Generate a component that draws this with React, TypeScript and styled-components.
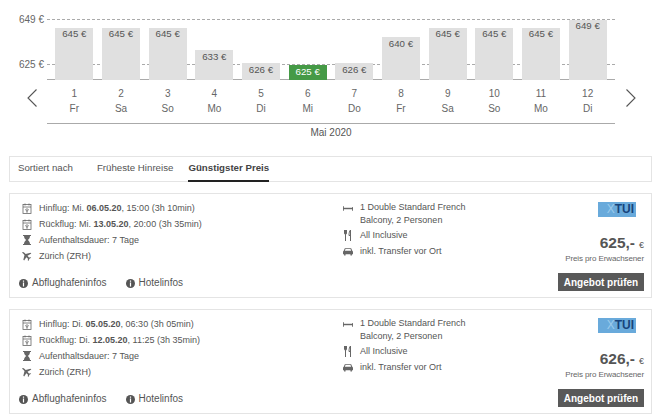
import { ReactNode } from 'react';
import styled, { createGlobalStyle } from 'styled-components';

const GlobalStyle = createGlobalStyle`
  html, body {
    margin: 0;
    padding: 0;
    background: #fff;
  }
  body {
    font-family: "Liberation Sans", Arial, sans-serif;
    font-size: 10px;
    color: #555;
  }
`;

const Page = styled.div`
  width: 667px;
  height: 419px;
  overflow: hidden;
`;

// Chart
const ChartRow = styled.div`
  display: grid;
  grid-template-columns: 47px 568px 52px;
  padding-top: 19px;
`;

const ArrowCell = styled.div`
  display: flex;
  padding-top: 70px;
  padding-left: ${p => (p.$left ? '27px' : '11px')};
  color: #555;
`;

const Plot = styled.div`
  position: relative;
  height: 60px;
  display: grid;
  grid-template-columns: repeat(12, 1fr);
  padding: 0 4px;
  align-items: end;
  border-bottom: 1px solid #aaa;
`;

const GuideLine = styled.div`
  position: absolute;
  left: 0;
  right: 0;
  top: ${p => p.$top}px;
  border-top: 1px dashed #aaa;
`;

const GuideLabel = styled.span`
  position: absolute;
  right: 100%;
  top: -6px;
  margin-right: 3px;
  white-space: nowrap;
  line-height: 12px;
  color: #666;
`;

const Bar = styled.div`
  position: relative;
  justify-self: center;
  width: 38px;
  height: ${p => p.$height}px;
  margin-bottom: -1px;
  background: ${p => (p.$best ? '#459a46' : '#e0e0e0')};
  color: ${p => (p.$best ? '#fff' : '#555')};
  font-size: 9.7px;
  text-align: center;
  line-height: 12px;
`;

const BarLabel = styled.span`
  display: block;
  margin-top: ${p => (p.$tight ? 1 : 0)}px;
`;

const Days = styled.div`
  display: grid;
  grid-template-columns: repeat(12, 1fr);
  padding: 6px 4px 7px;
  border-bottom: 1px solid #aaa;
`;

const Day = styled.div`
  text-align: center;
  line-height: 15px;
  color: #666;
`;

const Month = styled.div`
  text-align: center;
  line-height: 12px;
  margin-top: 3px;
  color: #555;
`;

// Sort bar
const SortBar = styled.div`
  display: flex;
  align-items: stretch;
  margin: 17px 15px 0 9px;
  height: 26px;
  box-sizing: border-box;
  border: 1px solid #e4e4e4;
  padding-left: 8px;
  font-size: 9.7px;
`;

const SortItem = styled.div`
  display: flex;
  align-items: center;
  margin-right: ${p => p.$gap}px;
  padding-bottom: 2px;
  font-weight: ${p => (p.$active ? 'bold' : 'normal')};
  color: ${p => (p.$active ? '#444' : '#555')};
  height: 25px;
  box-sizing: border-box;
  border-bottom: 2px solid ${p => (p.$active ? '#222' : 'transparent')};
`;

// Offer card
const Card = styled.div`
  display: grid;
  grid-template-columns: 321px 1fr auto;
  margin: ${p => p.$top}px 15px 0 9px;
  height: 105px;
  box-sizing: border-box;
  border: 1px solid #e4e4e4;
  padding: 6px 7px 7px 12px;
`;

const Column = styled.div`
  display: flex;
  flex-direction: column;
`;

const InfoRow = styled.div`
  display: flex;
  align-items: flex-start;
  gap: 7px;
  line-height: 16px;
  height: ${p => (p.$tall ? 'auto' : '16px')};
  white-space: nowrap;
  font-size: 9px;
  color: #555;
`;

const RowIcon = styled.span`
  display: flex;
  width: 10px;
  height: 16px;
  align-items: center;
  justify-content: center;
  flex: none;
  color: #666;
`;

const Links = styled.div`
  display: flex;
  gap: 19px;
  margin: auto 0 0 -3px;
`;

const InfoLink = styled.div`
  display: flex;
  align-items: center;
  gap: 4px;
  line-height: 16px;
`;

const MidText = styled.div`
  line-height: 13px;
  padding-top: 1px;
  white-space: normal;
  width: 120px;
`;

const RightColumn = styled.div`
  display: flex;
  flex-direction: column;
  align-items: flex-end;
`;

const Logo = styled.div`
  width: 38px;
  height: 15px;
  margin: 2px 8px 0 0;
  background: #69aadb;
  display: flex;
  align-items: center;
  justify-content: flex-end;
  padding-right: 2px;
  box-sizing: border-box;
  font-weight: bold;
  font-size: 12px;
  line-height: 15px;
  color: #17437c;
`;

const LogoMark = styled.span`
  color: #9ccbec;
  font-weight: normal;
`;

const Price = styled.div`
  margin-top: 18px;
  font-size: 15.5px;
  font-weight: bold;
  line-height: 16px;
  color: #555;
`;

const Currency = styled.span`
  font-size: 9px;
  font-weight: normal;
  margin-left: 4px;
`;

const PriceNote = styled.div`
  font-size: 8px;
  line-height: 10px;
  margin-top: 1px;
  color: #666;
  letter-spacing: -0.1px;
`;

const CheckButton = styled.button`
  margin-top: 9px;
  width: 86px;
  height: 18px;
  padding: 0;
  border: none;
  background: #595959;
  color: #fff;
  font-family: inherit;
  font-size: 10px;
  font-weight: bold;
`;

// Icons
const Chevron = ({ left }: { left?: boolean }) => (
  <svg width="10" height="18" viewBox="0 0 10 18" fill="none" stroke="currentColor" strokeWidth="1.1">
    <path d={left ? 'M9.5 .5 1 9l8.5 8.5' : 'M.5 .5 9 9l-8.5 8.5'} />
  </svg>
);

const CalendarIcon = () => (
  <svg width="10" height="11" viewBox="0 0 10 11" fill="none" stroke="currentColor" strokeWidth="0.8">
    <rect x="1" y="1.5" width="8" height="9" />
    <path d="M1 4h8M3 .5v2M7 .5v2" />
    <path d="M5 5v4M3 6.5l2 1 2-1M4 9h2" strokeWidth="0.7" />
  </svg>
);

const HourglassIcon = () => (
  <svg width="8" height="10" viewBox="0 0 8 10" fill="currentColor">
    <path d="M0 0h8v1H7c0 2-1 3-2.200 4C6 6 7 7 7 9h1v1H0V9h1c0-2 1-3 2.200-4C2 4 1 3 1 1H0z" />
  </svg>
);

// nose points to the upper left, as in the reference
const PlaneIcon = () => (
  <svg width="12" height="11" viewBox="0 0 12 11" fill="currentColor">
    <path d="M.4.400c.6-.5 1.700-.2 2.400.5l1.600 1.500L10.200 1l1 1-4.600 2.600 1.800 2 1.800-.3.800.8-2.100 1.200-1.200 2.600-.8-.8.300-1.800-2-1.800L2.600 10.400l-1-1L3 3.600 1.300 2C.6 1.300 0 .900.400.400z" />
  </svg>
);

const BedIcon = () => (
  <svg width="11" height="7" viewBox="0 0 11 7" fill="none" stroke="currentColor">
    <path d="M.5 1v5M10.500 2v4" />
    <path d="M0 3.500h11" strokeWidth="1.600" />
  </svg>
);

const CutleryIcon = () => (
  <svg width="8" height="11" viewBox="0 0 8 11" fill="none" stroke="currentColor" strokeWidth="1">
    <path d="M.5 0v3c0 1 .5 1.500 1 1.500S2.500 4 2.500 3V0M1.500 0v11" />
    <path d="M6.500 11V0C5.500 1 5 3 5 5.500h1.500" />
  </svg>
);

const CarIcon = () => (
  <svg width="11" height="9" viewBox="0 0 11 9" fill="currentColor">
    <path d="M2 .8h7l1.200 3c.5.200.8.600.8 1.200v2.500H9.800V9H8.200V7.500H2.800V9H1.200V7.500H0V5c0-.6.300-1 .8-1.200zM2.800 1.800 2 3.800h7l-.8-2z" />
  </svg>
);

const InfoIcon = () => (
  <svg width="9" height="9" viewBox="0 0 9 9">
    <circle cx="4.500" cy="4.500" r="4.500" fill="#555" />
    <path d="M3.900 1.600h1.200v1.200H3.900zM3.900 3.600h1.200v3.800H3.900z" fill="#fff" />
  </svg>
);

const days = [
  { day: 1, name: 'Fr', price: 645, height: 52 },
  { day: 2, name: 'Sa', price: 645, height: 52 },
  { day: 3, name: 'So', price: 645, height: 52 },
  { day: 4, name: 'Mo', price: 633, height: 30 },
  { day: 5, name: 'Di', price: 626, height: 17 },
  { day: 6, name: 'Mi', price: 625, height: 15 },
  { day: 7, name: 'Do', price: 626, height: 17 },
  { day: 8, name: 'Fr', price: 640, height: 43 },
  { day: 9, name: 'Sa', price: 645, height: 52 },
  { day: 10, name: 'So', price: 645, height: 52 },
  { day: 11, name: 'Mo', price: 645, height: 52 },
  { day: 12, name: 'Di', price: 649, height: 60 },
];

interface Offer {
  out: [string, string, string];
  back: [string, string, string];
  price: number;
}

const offers: Offer[] = [
  {
    out: ['Mi.', '06.05.20', '15:00 (3h 10min)'],
    back: ['Mi.', '13.05.20', '20:00 (3h 35min)'],
    price: 625,
  },
  {
    out: ['Di.', '05.05.20', '06:30 (3h 05min)'],
    back: ['Di.', '12.05.20', '11:25 (3h 35min)'],
    price: 626,
  },
];

const Row = ({ icon, tall, children }: { icon: ReactNode; tall?: boolean; children: ReactNode }) => (
  <InfoRow $tall={tall}>
    <RowIcon>{icon}</RowIcon>
    {children}
  </InfoRow>
);

const OfferCard = ({ offer, top }: { offer: Offer; top: number }) => (
  <Card $top={top}>
    <Column>
      <Row icon={<CalendarIcon />}>
        <span>Hinflug: {offer.out[0]} <b>{offer.out[1]}</b>, {offer.out[2]}</span>
      </Row>
      <Row icon={<CalendarIcon />}>
        <span>Rückflug: {offer.back[0]} <b>{offer.back[1]}</b>, {offer.back[2]}</span>
      </Row>
      <Row icon={<HourglassIcon />}>Aufenthaltsdauer: 7 Tage</Row>
      <Row icon={<PlaneIcon />}>Zürich (ZRH)</Row>
      <Links>
        <InfoLink><InfoIcon />Abflughafeninfos</InfoLink>
        <InfoLink><InfoIcon />Hotelinfos</InfoLink>
      </Links>
    </Column>
    <Column>
      <Row icon={<BedIcon />} tall>
        <MidText>1 Double Standard French Balcony, 2 Personen</MidText>
      </Row>
      <Row icon={<CutleryIcon />}>All Inclusive</Row>
      <Row icon={<CarIcon />}>inkl. Transfer vor Ort</Row>
    </Column>
    <RightColumn>
      <Logo><LogoMark>X</LogoMark>TUI</Logo>
      <Price>{offer.price},-<Currency>€</Currency></Price>
      <PriceNote>Preis pro Erwachsener</PriceNote>
      <CheckButton>Angebot prüfen</CheckButton>
    </RightColumn>
  </Card>
);

const App = () => (
  <Page>
    <GlobalStyle />
    <ChartRow>
      <ArrowCell $left><Chevron left /></ArrowCell>
      <div>
        <Plot>
          <GuideLine $top={0}><GuideLabel>649 €</GuideLabel></GuideLine>
          <GuideLine $top={45}><GuideLabel>625 €</GuideLabel></GuideLine>
          {days.map(d => (
            <Bar key={d.day} $height={d.height} $best={d.price === 625}>
              <BarLabel $tight={d.height < 50}>{d.price} €</BarLabel>
            </Bar>
          ))}
        </Plot>
        <Days>
          {days.map(d => (
            <Day key={d.day}>{d.day}<br />{d.name}</Day>
          ))}
        </Days>
        <Month>Mai 2020</Month>
      </div>
      <ArrowCell><Chevron /></ArrowCell>
    </ChartRow>
    <SortBar>
      <SortItem $gap={24}>Sortiert nach</SortItem>
      <SortItem $gap={15}>Früheste Hinreise</SortItem>
      <SortItem $active>Günstigster Preis</SortItem>
    </SortBar>
    <OfferCard offer={offers[0]} top={11} />
    <OfferCard offer={offers[1]} top={11} />
  </Page>
);

export default App;
